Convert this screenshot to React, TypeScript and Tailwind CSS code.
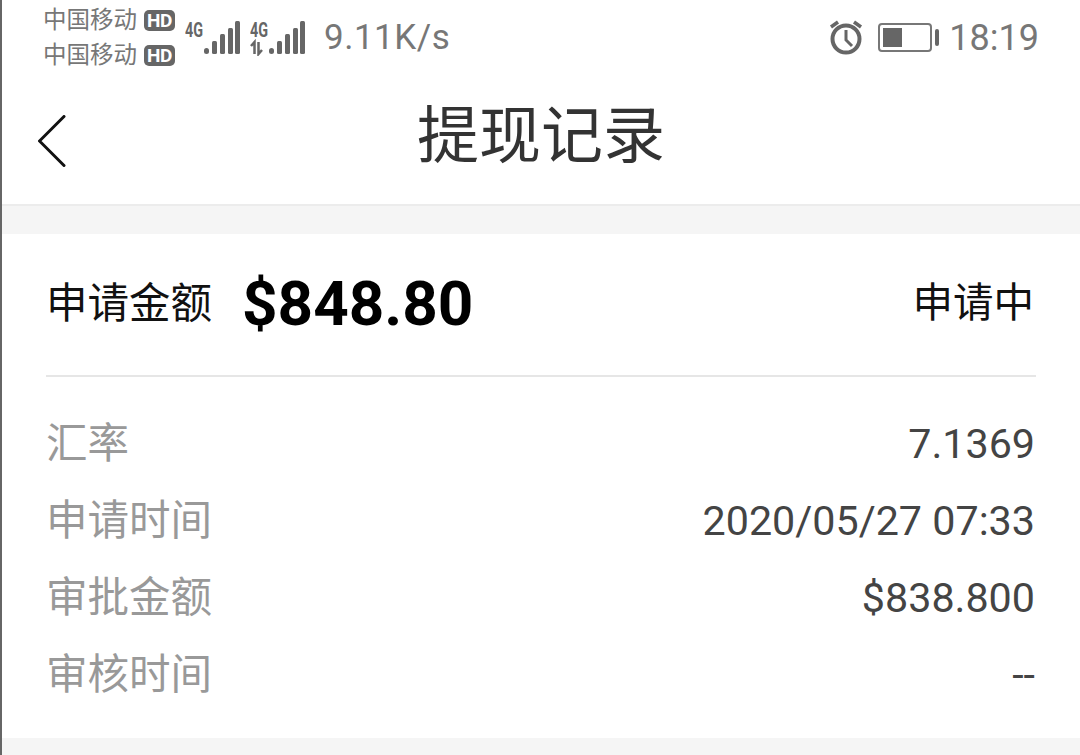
import React from 'react';

const cjk = "font-['Roboto','Noto_Sans_CJK_SC',sans-serif]";

const HdBadge = () => (
    <span className="flex h-[21px] w-[31px] items-center justify-center rounded-[5px] bg-[#666] font-['Roboto',sans-serif] text-[19px] leading-none font-bold tracking-[-0.5px] text-white">
        HD
    </span>
);

const Carrier = () => (
    <div className="flex h-[34px] items-center gap-[7px]">
        <span className="text-[23.5px] leading-none text-[#777]">中国移动</span>
        <HdBadge />
    </div>
);

const Signal = ({ arrows }: { arrows?: boolean }) => (
    <div className="relative h-[36px] w-[56px]">
        <span className="absolute top-0 left-0 origin-left scale-x-[0.72] font-['Roboto',sans-serif] text-[20px] leading-none font-bold text-[#666]">
            4G
        </span>
        <svg width="56" height="36" viewBox="0 0 56 36" fill="#666">
            {arrows && (
                <path d="M4.5 34V22l-3.5 4M8.5 22v12l3.5-4" fill="none" stroke="#666" strokeWidth="2.5" />
            )}
            <rect x="19" y="28" width="5" height="6" rx="2.5" />
            <rect x="27" y="21" width="5" height="13" rx="1.5" />
            <rect x="35" y="14" width="5" height="20" rx="1.5" />
            <rect x="43" y="8" width="5" height="26" rx="1.5" />
            <rect x="50" y="1" width="5" height="33" rx="1.5" />
        </svg>
    </div>
);

const AlarmIcon = () => (
    <svg width="34" height="36" viewBox="0 0 34 36" fill="none" stroke="#666">
        <circle cx="17" cy="20" r="13.5" strokeWidth="4" />
        <path d="M17 11v10l6 6" strokeWidth="3" />
        <path d="M2 8l7-5M32 8l-7-5" strokeWidth="3.5" />
    </svg>
);

const Battery = () => (
    <div className="flex items-center gap-[3px]">
        <div className="flex h-[29px] w-[54px] items-center rounded-[4px] border-[2px] border-[#777] p-[3px]">
            <div className="h-full w-[19px] bg-[#666]" />
        </div>
        <div className="h-[17px] w-[4px] rounded-[2px] bg-[#666]" />
    </div>
);

const StatusBar = () => (
    <div className="flex h-[74px] items-center justify-between pr-[41px] pl-[41px]">
        <div className="flex items-center">
            <div className="flex flex-col gap-[1px] pt-[2px]">
                <Carrier />
                <Carrier />
            </div>
            <div className="ml-[10px] flex items-center gap-[9px] pt-[2px]">
                <Signal />
                <Signal arrows />
            </div>
            <span className="ml-[18px] pt-[1px] text-[35px] leading-none tracking-[0.5px] text-[#777]">9.11K/s</span>
        </div>
        <div className="flex items-center">
            <AlarmIcon />
            <div className="ml-[15px]">
                <Battery />
            </div>
            <span className="ml-[10px] pt-[1px] text-[36px] leading-none text-[#777]">18:19</span>
        </div>
    </div>
);

const NavBar = () => (
    <div className="relative flex h-[132px] items-center justify-center border-b-[2px] border-[#ececec] pb-[4px]">
        <svg className="absolute top-[41px] left-[36px]" width="28" height="52" viewBox="0 0 28 52" fill="none" stroke="#111" strokeWidth="3" strokeLinecap="round">
            <path d="M26 1.5L1.5 26L26 50.5" />
        </svg>
        <h1 className="text-[62px] leading-none font-normal text-[#333]">提现记录</h1>
    </div>
);

const rows = [
    { label: '汇率', value: '7.1369' },
    { label: '申请时间', value: '2020/05/27 07:33' },
    { label: '审批金额', value: '$838.800' },
    { label: '审核时间', value: '--' },
];

export default function App() {
    return (
        <div className={`h-[755px] w-[1080px] overflow-hidden border-l-[2px] border-[#666] bg-[#f5f5f5] ${cjk}`}>
            <div className="bg-white">
                <StatusBar />
                <NavBar />
            </div>

            <div className="mt-[28px] h-[504px] bg-white pr-[44px] pl-[44px]">
                <div className="flex h-[143px] items-center justify-between border-b-[2px] border-[#e6e6e6] pb-[2px]">
                    <div className="flex items-center">
                        <span className="text-[41.5px] leading-none text-[#111]">申请金额</span>
                        <span className="ml-[30px] text-[62px] leading-none font-bold text-black">$848.80</span>
                    </div>
                    <span className="mr-[2px] text-[40.5px] leading-none text-[#111]">申请中</span>
                </div>

                <div className="flex flex-col pt-[28px]">
                    {rows.map((row) => (
                        <div key={row.label} className="flex h-[77px] items-center justify-between pr-[1px]">
                            <span className="text-[41.5px] leading-none text-[#999]">{row.label}</span>
                            <span className="pt-[3px] text-[41.25px] leading-none text-[#444]">{row.value}</span>
                        </div>
                    ))}
                </div>
            </div>
        </div>
    );
}
